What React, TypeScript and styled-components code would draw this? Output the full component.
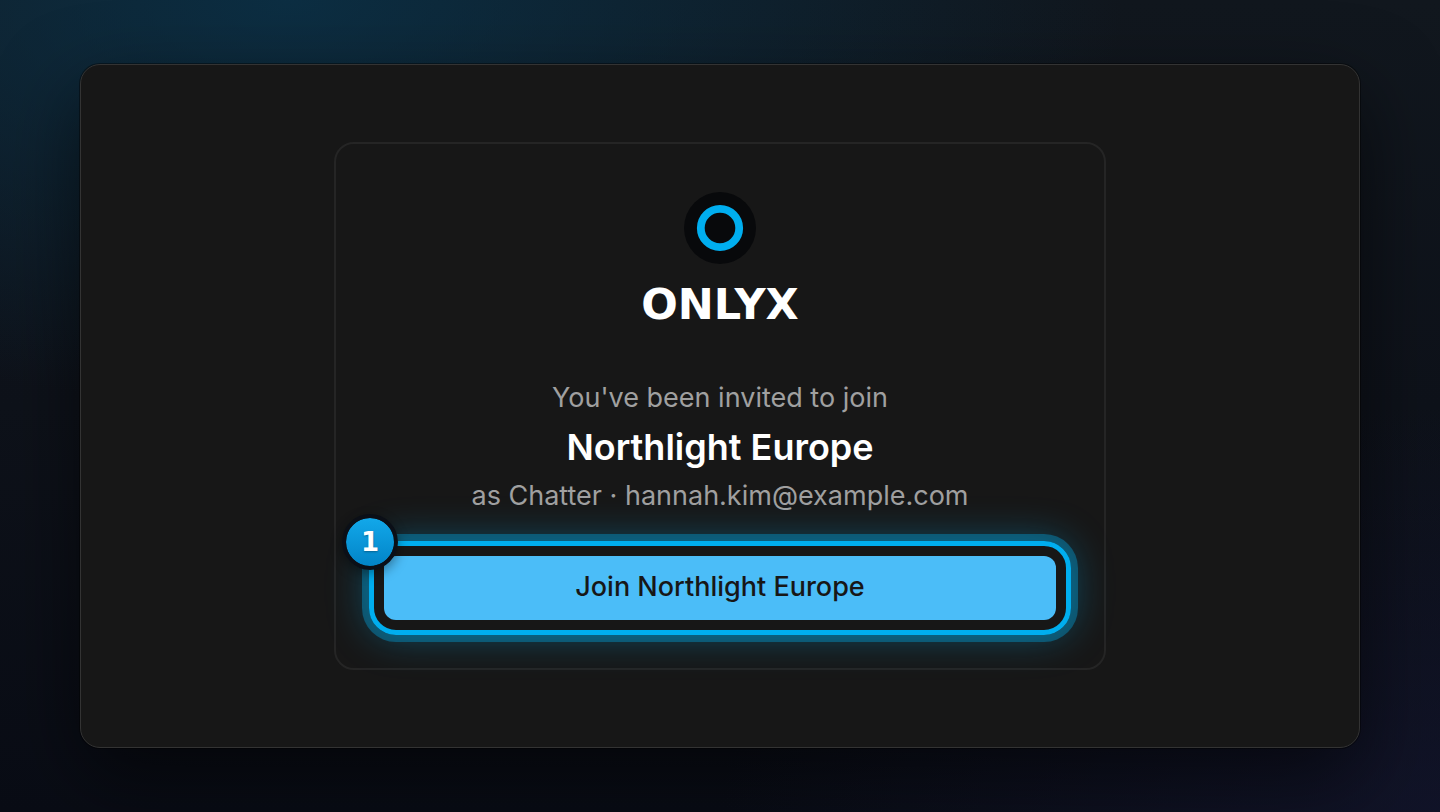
import React from "react";
import styled, { createGlobalStyle } from "styled-components";

const GlobalStyle = createGlobalStyle`
  * {
    box-sizing: border-box;
  }
  body {
    margin: 0;
    background: #0b0d15;
    font-family: Inter, "Liberation Sans", sans-serif;
  }
`;

const Page = styled.main`
  display: flex;
  min-height: 100vh;
  padding: 64px 80px;
  background:
    radial-gradient(ellipse 58% 50% at 20% 0%, rgba(10, 56, 82, 0.7), transparent),
    radial-gradient(ellipse 50% 50% at 100% 100%, rgba(24, 26, 56, 0.55), transparent),
    linear-gradient(180deg, #11171e 0%, #0e121a 50%, #090c15 100%);
`;

const Panel = styled.section`
  display: flex;
  flex: 1;
  align-items: center;
  justify-content: center;
  border: 1px solid #333333;
  border-radius: 20px;
  background: #171717;
  box-shadow:
    0 0 0 1px rgba(0, 0, 0, 0.4),
    0 30px 80px rgba(0, 0, 0, 0.55);
`;

const Card = styled.div`
  display: flex;
  flex-direction: column;
  align-items: center;
  width: 100%;
  max-width: 772px;
  padding: 48px;
  border: 2px solid #252525;
  border-radius: 20px;
  text-align: center;
`;

const LogoMark = styled.svg`
  display: block;
  width: 72px;
  height: 72px;
`;

const Wordmark = styled.div`
  margin: 16px 0 50px;
  color: #ffffff;
  font: bold 43px/48px "DejaVu Sans", sans-serif;
`;

const Detail = styled.p`
  margin: 0;
  color: #a0a0a0;
  font-size: 27px;
  line-height: 40px;
`;

const Workspace = styled.h1`
  margin: 0;
  color: #ffffff;
  font-size: 36px;
  font-weight: 600;
  line-height: 58px;
`;

const Highlight = styled.div`
  position: relative;
  width: 100%;
  margin-top: 40px;

  &::after {
    content: "";
    position: absolute;
    inset: -15px;
    border: 5px solid #00aeef;
    border-radius: 27px;
    box-shadow:
      0 0 0 7px rgba(0, 174, 239, 0.35),
      0 0 40px rgba(0, 174, 239, 0.4);
    pointer-events: none;
  }
`;

const JoinButton = styled.button`
  display: block;
  width: 100%;
  height: 64px;
  padding: 0 24px 4px;
  border: 0;
  border-radius: 12px;
  background: #4bbdf8;
  color: #171717;
  font-family: inherit;
  font-size: 27px;
  font-weight: 500;
  cursor: pointer;
`;

const StepBadge = styled.span`
  position: absolute;
  z-index: 1;
  top: -42px;
  left: -42px;
  display: flex;
  align-items: center;
  justify-content: center;
  width: 56px;
  height: 56px;
  border: 4px solid #0b0f17;
  border-radius: 50%;
  background: linear-gradient(#12a8ea, #0284c7) padding-box;
  box-shadow: 0 4px 12px rgba(0, 0, 0, 0.4);
  color: #ffffff;
  font: bold 26px/32px "DejaVu Sans", sans-serif;
  text-shadow: 0 1px 2px rgba(0, 0, 0, 0.3);
`;

export default function App() {
  return (
    <>
      <GlobalStyle />
      <Page>
        <Panel>
          <Card>
            <LogoMark viewBox="0 0 72 72" aria-hidden="true">
              <circle cx="36" cy="36" r="36" fill="#08090b" />
              <circle cx="36" cy="36" r="19.2" fill="none" stroke="#00aeef" strokeWidth="7.8" />
            </LogoMark>
            <Wordmark>ONLYX</Wordmark>
            <Detail>You've been invited to join</Detail>
            <Workspace>Northlight Europe</Workspace>
            <Detail>as Chatter · hannah.kim@example.com</Detail>
            <Highlight>
              <JoinButton type="button">Join Northlight Europe</JoinButton>
              <StepBadge>1</StepBadge>
            </Highlight>
          </Card>
        </Panel>
      </Page>
    </>
  );
}
